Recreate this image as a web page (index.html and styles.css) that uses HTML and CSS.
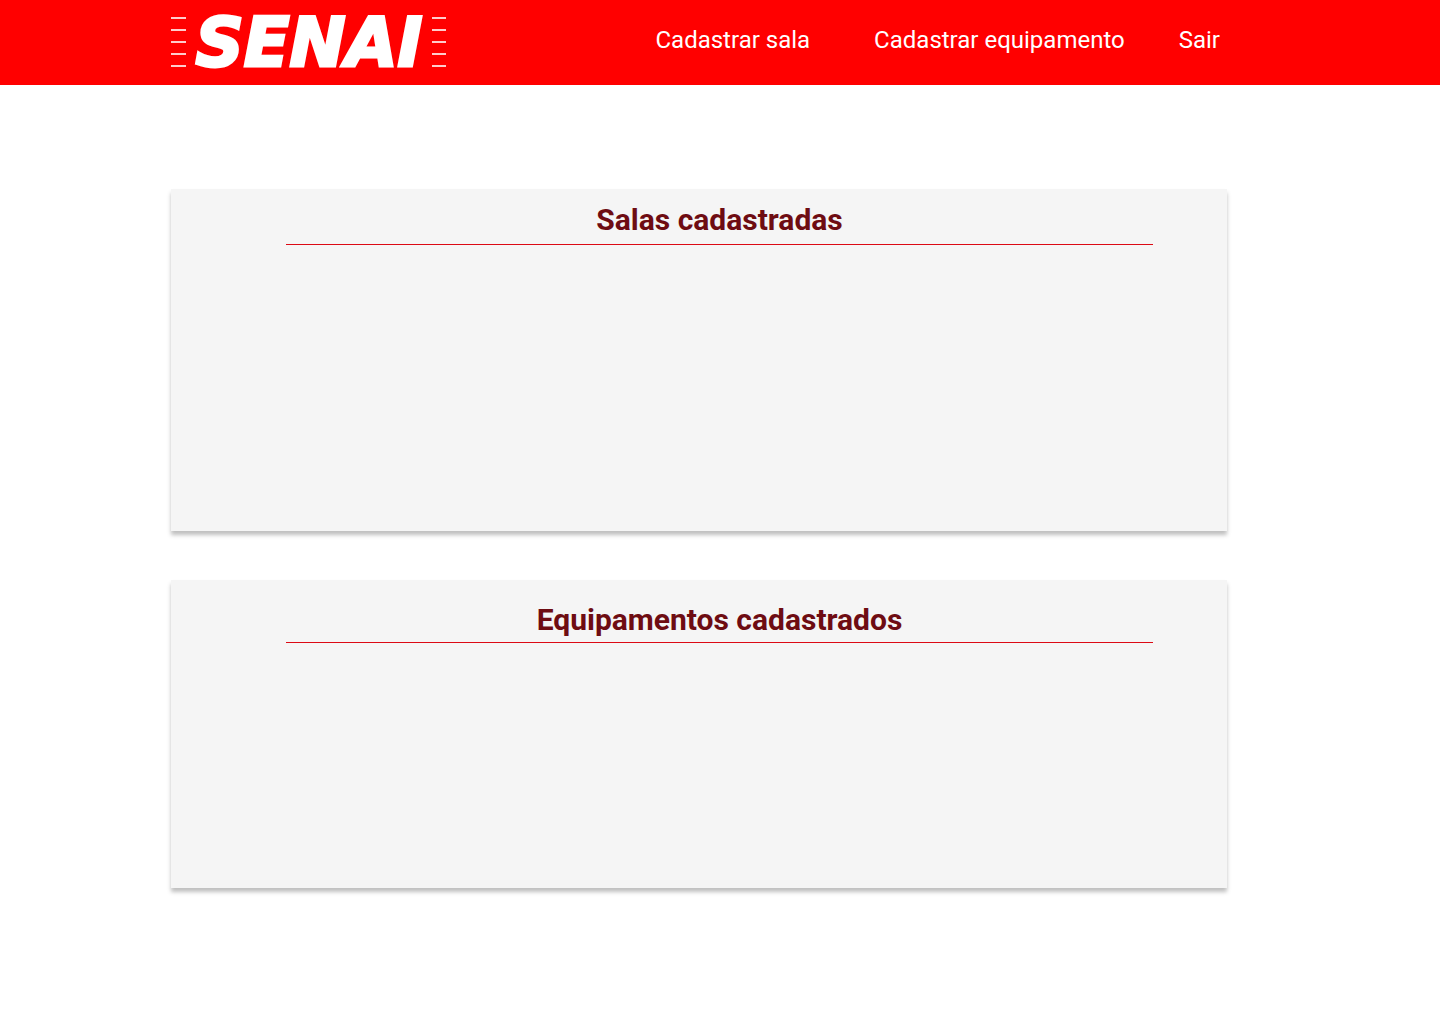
FILE: index.html
```html
<!DOCTYPE html>
<html lang="pt-BR">
<head>
  <meta charset="utf-8">
  <meta name="viewport" content="width=device-width, initial-scale=1">
  <title>SENAI</title>
  <link rel="stylesheet" href="styles.css">
</head>
<body>
  <header class="topbar">
    <a class="logo" href="#">
      <svg width="276" height="85" viewBox="0 0 276 85" role="img" aria-label="SENAI">
        <path class="logo-lines" d="M0 18h15M0 30h15M0 42h15M0 54h15M0 66h15M261 18h14M261 30h14M261 42h14M261 54h14M261 66h14"/>
        <text class="logo-name" x="138" y="66" text-anchor="middle">SENAI</text>
      </svg>
    </a>
    <nav class="menu">
      <a class="menu-link menu-link-first" href="#">Cadastrar sala</a>
      <a class="menu-link" href="#">Cadastrar equipamento</a>
      <a class="menu-link" href="#">Sair</a>
    </nav>
  </header>
  <main class="content">
    <section class="card card-rooms">
      <h2 class="card-title">Salas cadastradas</h2>
    </section>
    <section class="card card-equipment">
      <h2 class="card-title">Equipamentos cadastrados</h2>
    </section>
  </main>
</body>
</html>
```
FILE: styles.css
```css
* {
  box-sizing: border-box;
}

body {
  margin: 0;
  background: #fff;
  font-family: Roboto, sans-serif;
}

.topbar {
  display: flex;
  justify-content: space-between;
  align-items: flex-start;
  min-height: 85px;
  padding: 0 220px 0 171px;
  background: #f00;
}

.logo svg {
  display: block;
}

.logo-lines {
  stroke: #fff;
  stroke-width: 2;
  stroke-opacity: 0.8;
}

.logo-name {
  fill: #fff;
  stroke: #fff;
  stroke-width: 3;
  font-family: "DejaVu Sans", sans-serif;
  font-size: 67px;
  font-style: italic;
  font-weight: 700;
}

.menu {
  display: flex;
  gap: 54px;
  padding-top: 26px;
}

.menu-link {
  color: #fff;
  font-size: 24px;
  line-height: 28px;
  text-decoration: none;
}

.menu-link-first {
  margin-right: 10px;
}

.content {
  display: flex;
  flex-direction: column;
  gap: 49px;
  padding: 104px 213px 48px 171px;
}

.card {
  padding: 13px 74px 24px 115px;
  background: #f5f5f5;
  box-shadow: 0 4px 4px rgba(0, 0, 0, 0.25);
}

.card-rooms {
  min-height: 342px;
}

.card-equipment {
  min-height: 308px;
  padding-top: 22px;
}

.card-title {
  margin: 0;
  padding-bottom: 6px;
  border-bottom: 1px solid #dc0a14;
  color: #6e0c12;
  font-size: 30px;
  font-weight: 700;
  line-height: 36px;
  text-align: center;
}

.card-equipment .card-title {
  padding-bottom: 4px;
}
```
